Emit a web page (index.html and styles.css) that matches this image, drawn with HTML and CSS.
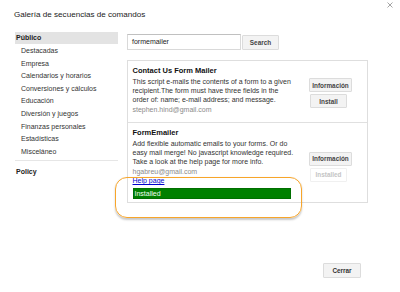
FILE: index.html
```html
<!DOCTYPE html>
<html lang="es">
<head>
<meta charset="utf-8">
<title>Galería de secuencias de comandos</title>
<link rel="stylesheet" href="styles.css">
</head>
<body>
<div class="dialog">
  <div class="header">
    <div class="title">Galería de secuencias de comandos</div>
    <svg class="close" width="6" height="6" viewBox="0 0 6 6"><path d="M0.5 0.5L5.5 5.5M5.5 0.5L0.5 5.5" stroke="#9a9a9a" stroke-width="0.9" fill="none"/></svg>
  </div>
  <div class="main">
    <div class="sidebar">
      <div class="nav-head">Público</div>
      <ul class="nav-list">
        <li>Destacadas</li>
        <li>Empresa</li>
        <li>Calendarios y horarios</li>
        <li>Conversiones y cálculos</li>
        <li>Educación</li>
        <li>Diversión y juegos</li>
        <li>Finanzas personales</li>
        <li>Estadísticas</li>
        <li>Misceláneo</li>
      </ul>
      <div class="nav-sep"></div>
      <div class="nav-policy">Policy</div>
    </div>
    <div class="content">
      <div class="search-row">
        <div class="search-input">formemailer</div>
        <div class="btn search-btn">Search</div>
      </div>
      <div class="results">
        <div class="item item-first">
          <div class="item-text">
            <div class="item-title">Contact Us Form Mailer</div>
            <div class="item-desc">This script e-mails the contents of a form to a given recipient.The form must have three fields in the order of: name; e-mail address; and message.</div>
            <div class="item-author">stephen.hind@gmail.com</div>
          </div>
          <div class="item-actions">
            <div class="btn btn-info">Información</div>
            <div class="btn btn-install">Install</div>
          </div>
        </div>
        <div class="item item-second">
          <div class="item-text">
            <div class="item-title">FormEmailer</div>
            <div class="item-desc">Add flexible automatic emails to your forms. Or do easy mail merge! No javascript knowledge required. Take a look at the help page for more info.</div>
            <div class="item-author">hgabreu@gmail.com</div>
            <a class="help-link" href="#">Help page</a>
            <div class="installed-bar">Installed</div>
          </div>
          <div class="item-actions">
            <div class="btn btn-info">Información</div>
            <div class="btn btn-install btn-disabled">Installed</div>
          </div>
        </div>
      </div>
    </div>
  </div>
  <div class="footer">
    <div class="btn btn-close">Cerrar</div>
  </div>
  <div class="highlight"></div>
</div>
</body>
</html>
```
FILE: styles.css
```css
html, body {
  margin: 0;
  padding: 0;
  background: #fff;
}
body {
  font-family: "Liberation Sans", Arial, sans-serif;
  color: #222;
  width: 400px;
  height: 292px;
  overflow: hidden;
}
.dialog {
  position: relative;
  width: 400px;
  height: 292px;
}
.header {
  display: flex;
  justify-content: space-between;
  align-items: flex-start;
  padding-left: 14px;
  padding-right: 7px;
}
.title {
  margin-top: 10px;
  font-size: 8.1px;
  line-height: 10px;
  color: #222;
}
.close {
  display: block;
  margin-top: 2px;
}
.main {
  display: flex;
  margin-top: 12px;
  padding-left: 15px;
}
.sidebar {
  width: 103px;
  font-size: 7px;
  color: #333;
}
.nav-head {
  height: 12px;
  line-height: 12px;
  background: #e3e3e3;
  font-weight: bold;
  color: #222;
  padding-left: 1px;
}
.nav-list {
  list-style: none;
  margin: 1px 0 0 0;
  padding: 0 0 0 6px;
}
.nav-list li {
  height: 12.6px;
  line-height: 12.6px;
  white-space: nowrap;
}
.nav-sep {
  margin-top: 1.5px;
  border-top: 1px solid #e6e6e6;
}
.nav-policy {
  margin-top: 5px;
  line-height: 12px;
  font-weight: bold;
  color: #222;
  padding-left: 1px;
}
.content {
  margin-left: 9px;
  width: 241px;
  padding-top: 2px;
}
.search-row {
  display: flex;
  align-items: flex-start;
}
.search-input {
  box-sizing: border-box;
  width: 114px;
  height: 16px;
  border: 1px solid #d9d9d9;
  border-top-color: #c0c0c0;
  padding-left: 4px;
  font-size: 7px;
  line-height: 14px;
  color: #222;
}
.btn {
  box-sizing: border-box;
  display: flex;
  align-items: center;
  justify-content: center;
  background: #f3f3f3;
  border: 1px solid #dcdcdc;
  border-radius: 1px;
  font-size: 6.4px;
  font-weight: bold;
  color: #444;
  white-space: nowrap;
}
.search-btn {
  margin-left: 1px;
  margin-top: 1px;
  width: 37px;
  height: 15px;
}
.results {
  margin-top: 10px;
  border: 1px solid #dedede;
}
.item {
  display: flex;
  align-items: center;
}
.item-first {
  border-bottom: 1px solid #e0e0e0;
  padding: 4.5px 0 8.5px 4.5px;
}
.item-second {
  padding: 5px 0 3px 4.5px;
}
.item-text {
  width: 162.5px;
  font-size: 7px;
  line-height: 9px;
}
.item-title {
  font-size: 7.5px;
  font-weight: bold;
  color: #111;
}
.item-desc {
  margin-top: 2px;
  color: #333;
}
.item-author {
  margin-top: 1px;
  color: #8a8a8a;
}
.help-link {
  display: block;
  color: #0000cc;
  text-decoration: underline;
}
.installed-bar {
  box-sizing: border-box;
  margin-top: 2.5px;
  width: 158px;
  height: 11px;
  line-height: 9px;
  background: #008000;
  border: 1px solid #006f00;
  color: #f2fff2;
  padding-left: 1px;
}
.item-actions {
  display: flex;
  flex-direction: column;
  align-items: flex-start;
  gap: 2px;
  margin-left: 14px;
  padding-top: 7px;
}
.btn-info {
  width: 43px;
  height: 14px;
}
.btn-install {
  width: 37px;
  height: 14px;
  margin-left: 1px;
}
.btn-disabled {
  background: #fff;
  border-color: #f0f0f0;
  color: #c4c4c4;
}
.footer {
  display: flex;
  justify-content: flex-end;
  padding-right: 39px;
  margin-top: 60px;
}
.btn-close {
  width: 38px;
  height: 15px;
  color: #333;
}
.highlight {
  position: absolute;
  left: 115px;
  top: 177px;
  width: 187px;
  height: 41px;
  box-sizing: border-box;
  border: 1.5px solid #f7a52a;
  border-radius: 12px;
  box-shadow: 0 1.5px 2px rgba(0, 0, 0, 0.22);
}
```
